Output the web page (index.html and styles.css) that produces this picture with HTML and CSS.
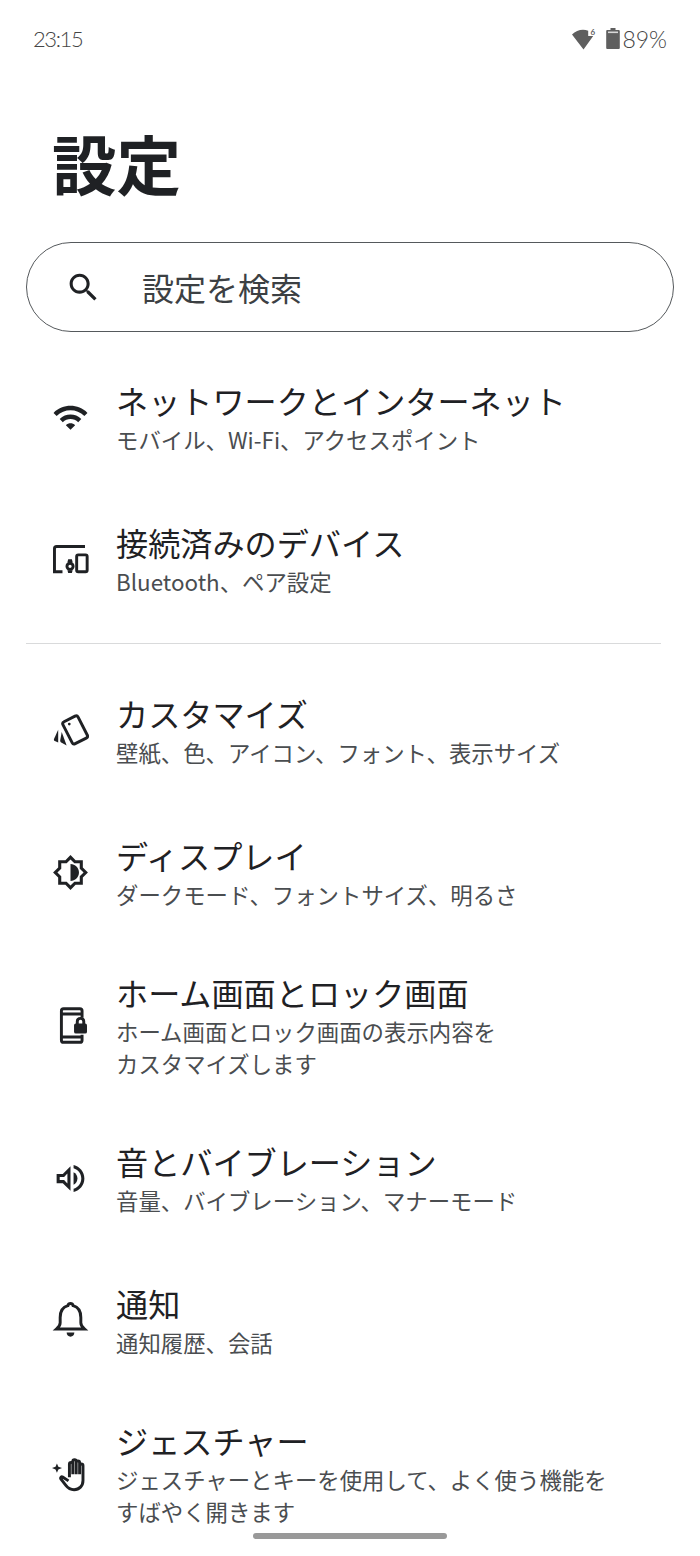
FILE: index.html
```html
<!DOCTYPE html>
<html lang="ja">
<head>
  <meta charset="UTF-8" />
  <meta name="viewport" content="width=device-width, initial-scale=1.0"/>
  <title>設定</title>
  <link rel="stylesheet" href="styles.css">
</head>
<body>

  <!-- STATUS BAR -->
  <div class="status-bar">
    <span class="time">23:15</span>
    <div class="status-right">
      <svg class="status-wifi" viewBox="0 0 26 22">
        <path d="M1 6.500C4 3.500 8 1.800 12 1.800c1.800 0 3.600.3 5.200 1V8h5L12.500 21.500z"/>
        <text class="wifi-six" x="19.500" y="6.500">6</text>
      </svg>
      <svg class="status-battery" viewBox="0 0 14 21">
        <path d="M4.500 0h5v2h3c.8 0 1.300.5 1.300 1.300v16.400c0 .8-.5 1.300-1.300 1.300h-11C.7 21 .2 20.500.2 19.700V3.300C.2 2.500.7 2 1.500 2h3z"/>
        <rect class="battery-top" x="2" y="3.500" width="10" height="1.600"/>
      </svg>
      <span class="pct">89%</span>
    </div>
  </div>

  <h1 class="page-title">設定</h1>

  <div class="search-box">
    <svg class="search-icon" viewBox="0 0 24 24">
      <path d="M15.500 14h-.79l-.28-.27C15.410 12.590 16 11.110 16 9.500 16 5.910 13.090 3 9.500 3S3 5.910 3 9.500 5.910 16 9.500 16c1.610 0 3.090-.59 4.230-1.570l.27.28v.79l5 4.990L20.490 19l-4.990-5zm-6 0C7.010 14 5 11.990 5 9.500S7.010 5 9.500 5 14 7.010 14 9.500 11.990 14 9.500 14z"/>
    </svg>
    <span>設定を検索</span>
  </div>

  <div class="list">
    <div class="row">
      <svg class="icon" viewBox="0 0 24 24">
        <path d="M1 9l2 2c4.970-4.970 13.030-4.970 18 0l2-2C16.930 2.930 7.080 2.930 1 9zm8 8l3 3 3-3c-1.650-1.660-4.340-1.660-6 0zm-4-4l2 2c2.760-2.760 7.240-2.760 10 0l2-2C15.140 9.140 8.870 9.140 5 13z"/>
      </svg>
      <div class="text">
        <div class="name">ネットワークとインターネット</div>
        <div class="desc">モバイル、Wi-Fi、アクセスポイント</div>
      </div>
    </div>

    <div class="row">
      <svg class="icon" viewBox="0 0 24 24">
        <path class="line-path" d="M21.400 3.600H3c-.8 0-1.400.6-1.400 1.400v15h5.200"/>
        <rect class="line-path" x="16" y="9" width="6.800" height="11" rx="1"/>
        <circle class="line-path" cx="11.700" cy="16.400" r="2"/>
        <path d="M10 13.800l.5-2h2.400l.5 2zM10 19l.5 1.800h2.400l.5-1.800z"/>
      </svg>
      <div class="text">
        <div class="name">接続済みのデバイス</div>
        <div class="desc">Bluetooth、ペア設定</div>
      </div>
    </div>

    <div class="divider"></div>

    <div class="row">
      <svg class="icon" viewBox="0 0 24 24">
        <rect class="line-path" x="9.500" y="3.600" width="11" height="16" rx="1.500" transform="rotate(-27 15 11.600)"/>
        <circle cx="11.200" cy="7.800" r=".9"/>
        <path d="M4 11.500l-2.700 6c-.2.600 0 1 .5 1.300l2.200 1z"/>
        <path d="M6.300 13l-1 5.500c0 .6.300 1 .7 1.300l3.500 1.900z"/>
      </svg>
      <div class="text">
        <div class="name">カスタマイズ</div>
        <div class="desc">壁紙、色、アイコン、フォント、表示サイズ</div>
      </div>
    </div>

    <div class="row">
      <svg class="icon" viewBox="0 0 24 24">
        <path d="M20 8.690V4h-4.690L12 .69 8.690 4H4v4.690L.69 12 4 15.310V20h4.690L12 23.310 15.310 20H20v-4.690L23.310 12 20 8.690zm-2 5.790V18h-3.520L12 20.480 9.520 18H6v-3.520L3.520 12 6 9.520V6h3.520L12 3.520 14.480 6H18v3.520L20.480 12 18 14.480zM12 6.500v11c3.030 0 5.500-2.470 5.500-5.500S15.030 6.500 12 6.500z"/>
      </svg>
      <div class="text">
        <div class="name">ディスプレイ</div>
        <div class="desc">ダークモード、フォントサイズ、明るさ</div>
      </div>
    </div>

    <div class="row">
      <svg class="icon" viewBox="0 0 24 24">
        <path class="line-path" d="M19.500 7V2.500c0-.8-.6-1.400-1.400-1.400H7.500c-.8 0-1.400.6-1.400 1.400v19c0 .8.6 1.400 1.400 1.400h10.600c.8 0 1.400-.6 1.400-1.400V18M6.100 4.500h13.400M6.100 19.500h13.400"/>
        <rect x="14.300" y="10.700" width="8.400" height="6.500" rx="1.200"/>
        <path class="line-path" d="M16.400 11v-1.600c0-1.200.9-2 2.100-2s2.100.8 2.100 2V11"/>
      </svg>
      <div class="text">
        <div class="name">ホーム画面とロック画面</div>
        <div class="desc">ホーム画面とロック画面の表示内容を<br>カスタマイズします</div>
      </div>
    </div>

    <div class="row">
      <svg class="icon" viewBox="0 0 24 24">
        <path d="M3 9v6h4l5 5V4L7 9H3zm7-.170v6.340L7.830 13H5v-2h2.830L10 8.830z"/>
        <path d="M16.500 12c0-1.770-1.020-3.290-2.500-4.030v8.050c1.480-.73 2.500-2.250 2.500-4.020z"/>
        <path d="M14 3.230v2.060c2.890.86 5 3.540 5 6.710s-2.110 5.850-5 6.710v2.060c4.010-.91 7-4.490 7-8.770 0-4.280-2.990-7.860-7-8.770z"/>
      </svg>
      <div class="text">
        <div class="name">音とバイブレーション</div>
        <div class="desc">音量、バイブレーション、マナーモード</div>
      </div>
    </div>

    <div class="row">
      <svg class="icon" viewBox="0 0 24 24">
        <path class="line-path" d="M12 1c.9 0 1.500.6 1.700 1.400 3.600 1 5 4.100 5 7.600v3.500c0 1.500.9 2.800 2.300 4H3c1.400-1.200 2.300-2.500 2.300-4V10c0-3.500 1.400-6.600 5-7.600C10.500 1.600 11.100 1 12 1z"/>
        <path d="M9.500 19.800h5c0 1.600-1.100 2.700-2.500 2.700s-2.500-1.100-2.500-2.700z"/>
      </svg>
      <div class="text">
        <div class="name">通知</div>
        <div class="desc">通知履歴、会話</div>
      </div>
    </div>

    <div class="row">
      <svg class="icon" viewBox="0 0 24 24">
        <path class="line-path" transform="translate(1.800 .5)" d="M9.500 14V5.500c0-.7.500-1.200 1.100-1.200s1.100.5 1.100 1.200V12M11.700 12V3.700c0-.7.500-1.200 1.100-1.200s1.100.5 1.100 1.200V12M13.900 12V4.500c0-.7.500-1.200 1.100-1.200s1.100.5 1.100 1.200V12M16.100 12V6.500c0-.7.500-1.200 1.100-1.200s1.100.5 1.100 1.200v9.500c0 3.600-2.400 6-5.800 6-2.600 0-4-1.100-5.300-2.800l-3.300-4.200c-.5-.7.400-1.700 1.200-1.200l3.800 2.500"/>
        <path d="M3.200 5.500l.9 2.100 2.400.9-2.400.9-.9 2.100-.9-2.100L0 8.500l2.300-.9z"/>
      </svg>
      <div class="text">
        <div class="name">ジェスチャー</div>
        <div class="desc">ジェスチャーとキーを使用して、よく使う機能を<br>すばやく開きます</div>
      </div>
    </div>
  </div>

  <div class="home-pill"></div>

</body>
</html>
```

FILE: styles.css
```css
* {
  margin: 0; padding: 0;
  box-sizing: border-box;
  font-family: "Noto Sans CJK JP", "Noto Sans", sans-serif;
}

html, body {
  height: 100%;
  overflow: hidden;
  background-color: white;
}

body {
  position: relative;
  color: #1f2124;
}

/* Status bar */
.status-bar {
  display: flex;
  justify-content: space-between;
  align-items: center;
  height: 77px;
  padding: 0 33px;
  color: #454545;
}

.time {
  font-family: "Lato", sans-serif;
  font-size: 22px;
  font-weight: 300;
  letter-spacing: -1.400px;
}

.pct {
  font-family: "Lato", sans-serif;
  font-size: 23px;
  font-weight: 300;
}

.status-right {
  display: flex;
  align-items: center;
}

.status-wifi {
  width: 26px;
  height: 22px;
  margin-right: 9px;
  fill: #5f5f5f;
}

.wifi-six {
  font-family: "Lato", sans-serif;
  font-size: 8px;
  font-weight: 700;
}

.status-battery {
  width: 14px;
  height: 21px;
  margin-right: 2px;
  fill: #5f5f5f;
}

.battery-top {
  fill: #d8d8d8;
}

/* Title */
.page-title {
  font-size: 64.500px;
  font-weight: 700;
  line-height: 90px;
  margin-top: 40px;
  padding-left: 52px;
}

/* Search */
.search-box {
  display: flex;
  align-items: center;
  height: 90px;
  margin: 35px 26px 0;
  padding-left: 38px;
  border: 1px solid #55595c;
  border-radius: 45px;
  font-size: 32px;
  color: #3c4043;
}

.search-icon {
  width: 37px;
  height: 37px;
  margin-right: 40px;
  fill: #1f2124;
}

/* Rows */
.list {
  margin-top: 18px;
}

.row {
  display: flex;
  align-items: center;
  min-height: 142.500px;
  padding: 24px 30px 24px 52px;
}

.icon {
  flex-shrink: 0;
  width: 37px;
  height: 37px;
  margin-right: 28px;
  margin-bottom: 8px;
  fill: #1f2124;
}

.line-path {
  fill: none;
  stroke: #1f2124;
  stroke-width: 1.900;
}

.text {
  padding-bottom: 8px;
  margin-left: -1px;
}

.name {
  font-size: 32.150px;
  line-height: 40px;
  margin-bottom: 3px;
  color: #1f2124;
}

.desc {
  font-size: 22.400px;
  line-height: 32px;
  color: #4a4d50;
}

.divider {
  height: 1px;
  margin: 8px 39px 19px 26px;
  background-color: #d9dadb;
}

.home-pill {
  position: absolute;
  left: 253px;
  top: 1533px;
  width: 194px;
  height: 6px;
  border-radius: 3px;
  background-color: #999;
}
```
